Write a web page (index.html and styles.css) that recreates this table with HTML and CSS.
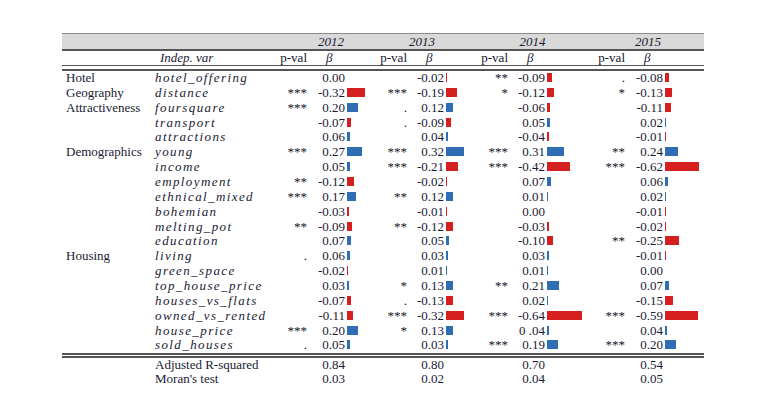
FILE: index.html
```html
<!DOCTYPE html>
<html>
<head>
<meta charset="utf-8">
<link rel="stylesheet" href="styles.css">
</head>
<body>
<div class="table">
  <div class="grid years">
    <div class="y y12">2012</div>
    <div class="y y13">2013</div>
    <div class="y y14">2014</div>
    <div class="y y15">2015</div>
  </div>
  <div class="grid head">
    <div></div>
    <div class="hvar">Indep. var</div>
    <div class="p">p-val</div><div class="beta">β</div><div></div>
    <div class="p">p-val</div><div class="beta">β</div><div></div>
    <div class="p">p-val</div><div class="beta">β</div><div></div>
    <div class="p">p-val</div><div class="beta">β</div><div></div>
  </div>
  <div class="rule"></div>
  <div class="body">
    <div class="grid row">
      <div class="cat">Hotel</div><div class="var">hotel_offering</div>
      <div class="p"></div><div class="v">0.00</div><div class="b"></div>
      <div class="p"></div><div class="v">-0.02</div><div class="b"><span class="bar neg" style="width:1.1px"></span></div>
      <div class="p">**</div><div class="v">-0.09</div><div class="b"><span class="bar neg" style="width:5px"></span></div>
      <div class="p">.</div><div class="v">-0.08</div><div class="b"><span class="bar neg" style="width:4.4px"></span></div>
    </div>
    <div class="grid row">
      <div class="cat">Geography</div><div class="var">distance</div>
      <div class="p">***</div><div class="v">-0.32</div><div class="b"><span class="bar neg" style="width:17.6px"></span></div>
      <div class="p">***</div><div class="v">-0.19</div><div class="b"><span class="bar neg" style="width:10.5px"></span></div>
      <div class="p">*</div><div class="v">-0.12</div><div class="b"><span class="bar neg" style="width:6.6px"></span></div>
      <div class="p">*</div><div class="v">-0.13</div><div class="b"><span class="bar neg" style="width:7.2px"></span></div>
    </div>
    <div class="grid row">
      <div class="cat">Attractiveness</div><div class="var">foursquare</div>
      <div class="p">***</div><div class="v">0.20</div><div class="b"><span class="bar pos" style="width:11px"></span></div>
      <div class="p">.</div><div class="v">0.12</div><div class="b"><span class="bar pos" style="width:6.6px"></span></div>
      <div class="p"></div><div class="v">-0.06</div><div class="b"><span class="bar neg" style="width:3.3px"></span></div>
      <div class="p"></div><div class="v">-0.11</div><div class="b"><span class="bar neg" style="width:6px"></span></div>
    </div>
    <div class="grid row">
      <div class="cat"></div><div class="var">transport</div>
      <div class="p"></div><div class="v">-0.07</div><div class="b"><span class="bar neg" style="width:3.9px"></span></div>
      <div class="p">.</div><div class="v">-0.09</div><div class="b"><span class="bar neg" style="width:5px"></span></div>
      <div class="p"></div><div class="v">0.05</div><div class="b"><span class="bar pos" style="width:2.7px"></span></div>
      <div class="p"></div><div class="v">0.02</div><div class="b"><span class="bar pos" style="width:1.1px"></span></div>
    </div>
    <div class="grid row">
      <div class="cat"></div><div class="var">attractions</div>
      <div class="p"></div><div class="v">0.06</div><div class="b"><span class="bar pos" style="width:3.3px"></span></div>
      <div class="p"></div><div class="v">0.04</div><div class="b"><span class="bar pos" style="width:2.2px"></span></div>
      <div class="p"></div><div class="v">-0.04</div><div class="b"><span class="bar neg" style="width:2.2px"></span></div>
      <div class="p"></div><div class="v">-0.01</div><div class="b"><span class="bar neg" style="width:0.6px"></span></div>
    </div>
    <div class="grid row">
      <div class="cat">Demographics</div><div class="var">young</div>
      <div class="p">***</div><div class="v">0.27</div><div class="b"><span class="bar pos" style="width:14.9px"></span></div>
      <div class="p">***</div><div class="v">0.32</div><div class="b"><span class="bar pos" style="width:17.6px"></span></div>
      <div class="p">***</div><div class="v">0.31</div><div class="b"><span class="bar pos" style="width:17px"></span></div>
      <div class="p">**</div><div class="v">0.24</div><div class="b"><span class="bar pos" style="width:13.2px"></span></div>
    </div>
    <div class="grid row">
      <div class="cat"></div><div class="var">income</div>
      <div class="p"></div><div class="v">0.05</div><div class="b"><span class="bar pos" style="width:2.7px"></span></div>
      <div class="p">***</div><div class="v">-0.21</div><div class="b"><span class="bar neg" style="width:11.5px"></span></div>
      <div class="p">***</div><div class="v">-0.42</div><div class="b"><span class="bar neg" style="width:23.1px"></span></div>
      <div class="p">***</div><div class="v">-0.62</div><div class="b"><span class="bar neg" style="width:34.1px"></span></div>
    </div>
    <div class="grid row">
      <div class="cat"></div><div class="var">employment</div>
      <div class="p">**</div><div class="v">-0.12</div><div class="b"><span class="bar neg" style="width:6.6px"></span></div>
      <div class="p"></div><div class="v">-0.02</div><div class="b"><span class="bar neg" style="width:1.1px"></span></div>
      <div class="p"></div><div class="v">0.07</div><div class="b"><span class="bar pos" style="width:3.9px"></span></div>
      <div class="p"></div><div class="v">0.06</div><div class="b"><span class="bar pos" style="width:3.3px"></span></div>
    </div>
    <div class="grid row">
      <div class="cat"></div><div class="var">ethnical_mixed</div>
      <div class="p">***</div><div class="v">0.17</div><div class="b"><span class="bar pos" style="width:9.4px"></span></div>
      <div class="p">**</div><div class="v">0.12</div><div class="b"><span class="bar pos" style="width:6.6px"></span></div>
      <div class="p"></div><div class="v">0.01</div><div class="b"><span class="bar pos" style="width:0.6px"></span></div>
      <div class="p"></div><div class="v">0.02</div><div class="b"><span class="bar pos" style="width:1.1px"></span></div>
    </div>
    <div class="grid row">
      <div class="cat"></div><div class="var">bohemian</div>
      <div class="p"></div><div class="v">-0.03</div><div class="b"><span class="bar neg" style="width:1.6px"></span></div>
      <div class="p"></div><div class="v">-0.01</div><div class="b"><span class="bar neg" style="width:0.6px"></span></div>
      <div class="p"></div><div class="v">0.00</div><div class="b"></div>
      <div class="p"></div><div class="v">-0.01</div><div class="b"><span class="bar neg" style="width:0.6px"></span></div>
    </div>
    <div class="grid row">
      <div class="cat"></div><div class="var">melting_pot</div>
      <div class="p">**</div><div class="v">-0.09</div><div class="b"><span class="bar neg" style="width:5px"></span></div>
      <div class="p">**</div><div class="v">-0.12</div><div class="b"><span class="bar neg" style="width:6.6px"></span></div>
      <div class="p"></div><div class="v">-0.03</div><div class="b"><span class="bar neg" style="width:1.6px"></span></div>
      <div class="p"></div><div class="v">-0.02</div><div class="b"><span class="bar neg" style="width:1.1px"></span></div>
    </div>
    <div class="grid row">
      <div class="cat"></div><div class="var">education</div>
      <div class="p"></div><div class="v">0.07</div><div class="b"><span class="bar pos" style="width:3.9px"></span></div>
      <div class="p"></div><div class="v">0.05</div><div class="b"><span class="bar pos" style="width:2.7px"></span></div>
      <div class="p"></div><div class="v">-0.10</div><div class="b"><span class="bar neg" style="width:5.5px"></span></div>
      <div class="p">**</div><div class="v">-0.25</div><div class="b"><span class="bar neg" style="width:13.8px"></span></div>
    </div>
    <div class="grid row">
      <div class="cat">Housing</div><div class="var">living</div>
      <div class="p">.</div><div class="v">0.06</div><div class="b"><span class="bar pos" style="width:3.3px"></span></div>
      <div class="p"></div><div class="v">0.03</div><div class="b"><span class="bar pos" style="width:1.6px"></span></div>
      <div class="p"></div><div class="v">0.03</div><div class="b"><span class="bar pos" style="width:1.6px"></span></div>
      <div class="p"></div><div class="v">-0.01</div><div class="b"><span class="bar neg" style="width:0.6px"></span></div>
    </div>
    <div class="grid row">
      <div class="cat"></div><div class="var">green_space</div>
      <div class="p"></div><div class="v">-0.02</div><div class="b"><span class="bar neg" style="width:1.1px"></span></div>
      <div class="p"></div><div class="v">0.01</div><div class="b"><span class="bar pos" style="width:0.6px"></span></div>
      <div class="p"></div><div class="v">0.01</div><div class="b"><span class="bar pos" style="width:0.6px"></span></div>
      <div class="p"></div><div class="v">0.00</div><div class="b"></div>
    </div>
    <div class="grid row">
      <div class="cat"></div><div class="var">top_house_price</div>
      <div class="p"></div><div class="v">0.03</div><div class="b"><span class="bar pos" style="width:1.6px"></span></div>
      <div class="p">*</div><div class="v">0.13</div><div class="b"><span class="bar pos" style="width:7.2px"></span></div>
      <div class="p">**</div><div class="v">0.21</div><div class="b"><span class="bar pos" style="width:11.5px"></span></div>
      <div class="p"></div><div class="v">0.07</div><div class="b"><span class="bar pos" style="width:3.9px"></span></div>
    </div>
    <div class="grid row">
      <div class="cat"></div><div class="var">houses_vs_flats</div>
      <div class="p"></div><div class="v">-0.07</div><div class="b"><span class="bar neg" style="width:3.9px"></span></div>
      <div class="p">.</div><div class="v">-0.13</div><div class="b"><span class="bar neg" style="width:7.2px"></span></div>
      <div class="p"></div><div class="v">0.02</div><div class="b"><span class="bar pos" style="width:1.1px"></span></div>
      <div class="p"></div><div class="v">-0.15</div><div class="b"><span class="bar neg" style="width:8.3px"></span></div>
    </div>
    <div class="grid row">
      <div class="cat"></div><div class="var">owned_vs_rented</div>
      <div class="p"></div><div class="v">-0.11</div><div class="b"><span class="bar neg" style="width:6px"></span></div>
      <div class="p">***</div><div class="v">-0.32</div><div class="b"><span class="bar neg" style="width:17.6px"></span></div>
      <div class="p">***</div><div class="v">-0.64</div><div class="b"><span class="bar neg" style="width:35.2px"></span></div>
      <div class="p">***</div><div class="v">-0.59</div><div class="b"><span class="bar neg" style="width:32.5px"></span></div>
    </div>
    <div class="grid row">
      <div class="cat"></div><div class="var">house_price</div>
      <div class="p">***</div><div class="v">0.20</div><div class="b"><span class="bar pos" style="width:11px"></span></div>
      <div class="p">*</div><div class="v">0.13</div><div class="b"><span class="bar pos" style="width:7.2px"></span></div>
      <div class="p"></div><div class="v">0 .04</div><div class="b"><span class="bar pos" style="width:2.2px"></span></div>
      <div class="p"></div><div class="v">0.04</div><div class="b"><span class="bar pos" style="width:2.2px"></span></div>
    </div>
    <div class="grid row">
      <div class="cat"></div><div class="var">sold_houses</div>
      <div class="p">.</div><div class="v">0.05</div><div class="b"><span class="bar pos" style="width:2.7px"></span></div>
      <div class="p"></div><div class="v">0.03</div><div class="b"><span class="bar pos" style="width:1.6px"></span></div>
      <div class="p">***</div><div class="v">0.19</div><div class="b"><span class="bar pos" style="width:10.5px"></span></div>
      <div class="p">***</div><div class="v">0.20</div><div class="b"><span class="bar pos" style="width:11px"></span></div>
    </div>
  </div>
  <div class="rule bottom"></div>
  <div class="foot">
    <div class="grid frow">
      <div></div><div class="flabel">Adjusted R-squared</div>
      <div></div><div class="v">0.84</div><div></div>
      <div></div><div class="v">0.80</div><div></div>
      <div></div><div class="v">0.70</div><div></div>
      <div></div><div class="v">0.54</div><div></div>
    </div>
    <div class="grid frow">
      <div></div><div class="flabel">Moran's test</div>
      <div></div><div class="v">0.03</div><div></div>
      <div></div><div class="v">0.02</div><div></div>
      <div></div><div class="v">0.04</div><div></div>
      <div></div><div class="v">0.05</div><div></div>
    </div>
  </div>
</div>
</body>
</html>
```

FILE: styles.css
```css
html, body {
  margin: 0;
  padding: 0;
  background: #ffffff;
}
body {
  font-family: "Liberation Serif", "Times New Roman", serif;
  font-size: 13px;
  color: #1a1a33;
}
.table {
  margin: 33px 0 0 62px;
  width: 642px;
}
.grid {
  display: grid;
  grid-template-columns: 93px 115px 37px 38px 27px 35px 37px 28px 36px 37px 40px 40px 38px 41px;
  align-items: center;
}
.years {
  border-top: 1px solid #8c8c8c;
  border-bottom: 2px solid #555555;
  background: #d9d9d9;
  height: 15px;
}
.y {
  font-style: italic;
  text-align: center;
  line-height: 15px;
}
.y12 { grid-column: 3 / 6; padding-left: 20px; }
.y13 { grid-column: 6 / 9; }
.y14 { grid-column: 9 / 12; padding-left: 8px; }
.y15 { grid-column: 12 / 15; padding-left: 7px; }
.head {
  height: 14px;
  line-height: 14px;
}
.hvar {
  font-style: italic;
  padding-left: 5px;
}
.beta {
  font-style: italic;
  padding-left: 19px;
}
.rule {
  border-top: 1px solid #555555;
  border-bottom: 2px solid #555555;
  height: 3px;
}
.rule.bottom {
  border-top: 2px solid #555555;
  height: 1px;
}
.row {
  height: 14.87px;
  line-height: 14.87px;
}
.cat {
  padding-left: 4px;
  white-space: nowrap;
}
.var {
  font-style: italic;
  letter-spacing: 1.4px;
  white-space: nowrap;
}
.p {
  text-align: right;
  white-space: nowrap;
  color: #141428;
}
.v {
  text-align: right;
  white-space: nowrap;
}
.b {
  display: flex;
  align-items: center;
  height: 100%;
  padding-left: 2px;
}
.bar {
  display: block;
  height: 9px;
  margin-top: -2px;
}
.bar.neg { background: #d61f1f; }
.bar.pos { background: #2f6db4; }
.frow {
  height: 14px;
  line-height: 14px;
}
.flabel {
  white-space: nowrap;
}
```
